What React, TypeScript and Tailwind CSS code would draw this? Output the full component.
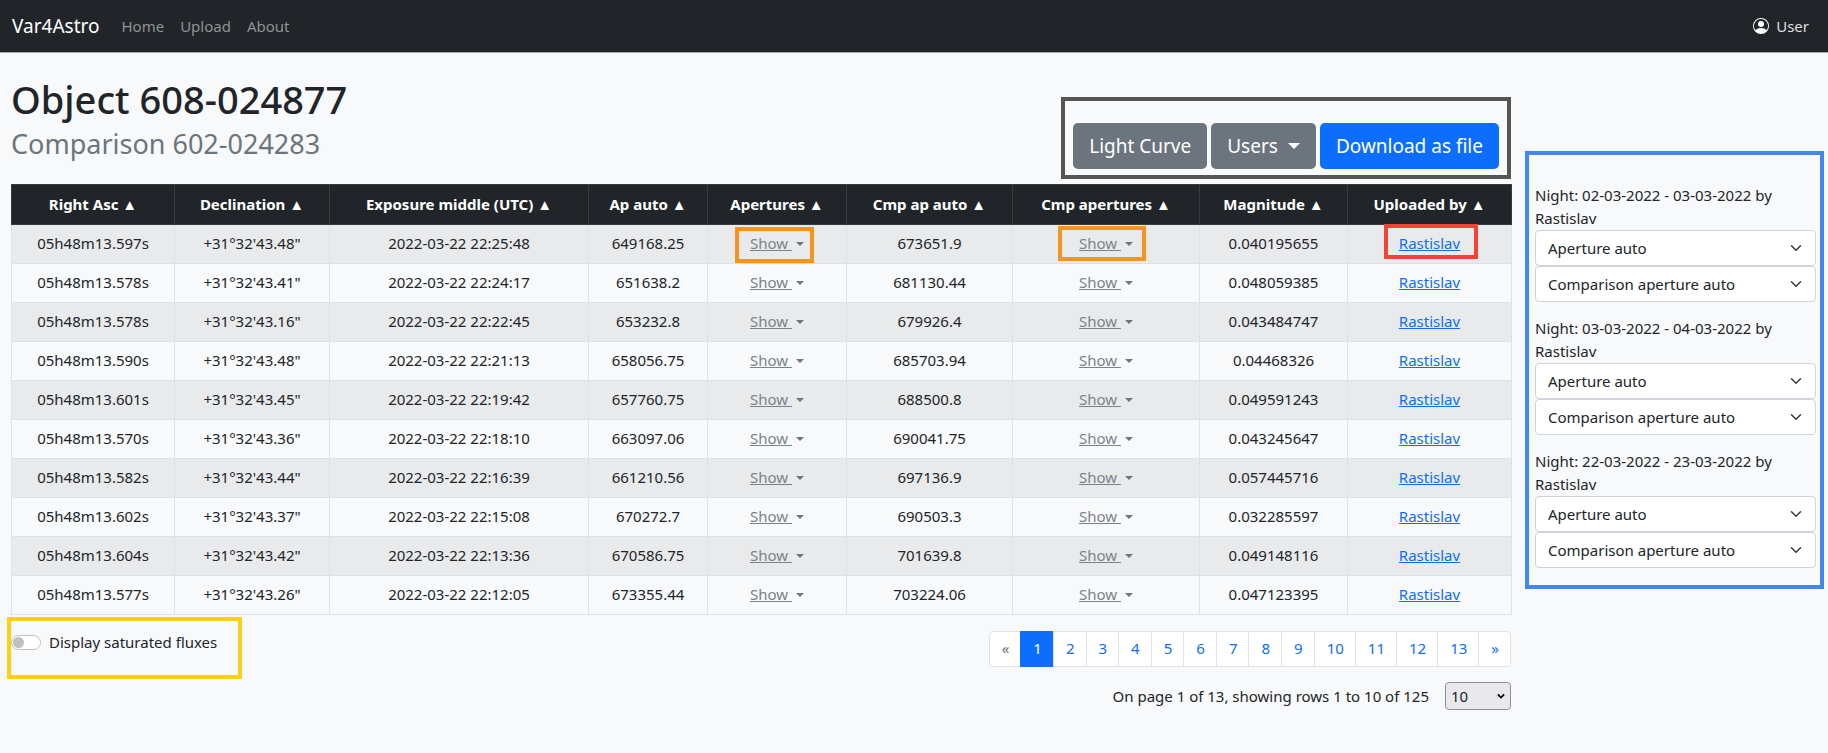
import React from 'react';
import { BsPersonCircle } from 'react-icons/bs';

const columns = [
  { title: 'Right Asc', width: 'w-[163px]' },
  { title: 'Declination', width: 'w-[155px]' },
  { title: 'Exposure middle (UTC)', width: 'w-[259px]' },
  { title: 'Ap auto', width: 'w-[119px]' },
  { title: 'Apertures', width: 'w-[139px]' },
  { title: 'Cmp ap auto', width: 'w-[166px]' },
  { title: 'Cmp apertures', width: 'w-[187px]' },
  { title: 'Magnitude', width: 'w-[148px]' },
  { title: 'Uploaded by', width: 'w-[164px]' },
];

const rows = [
  ['05h48m13.597s', '+31°32\'43.48"', '2022-03-22 22:25:48', '649168.25', '673651.9', '0.040195655'],
  ['05h48m13.578s', '+31°32\'43.41"', '2022-03-22 22:24:17', '651638.2', '681130.44', '0.048059385'],
  ['05h48m13.578s', '+31°32\'43.16"', '2022-03-22 22:22:45', '653232.8', '679926.4', '0.043484747'],
  ['05h48m13.590s', '+31°32\'43.48"', '2022-03-22 22:21:13', '658056.75', '685703.94', '0.04468326'],
  ['05h48m13.601s', '+31°32\'43.45"', '2022-03-22 22:19:42', '657760.75', '688500.8', '0.049591243'],
  ['05h48m13.570s', '+31°32\'43.36"', '2022-03-22 22:18:10', '663097.06', '690041.75', '0.043245647'],
  ['05h48m13.582s', '+31°32\'43.44"', '2022-03-22 22:16:39', '661210.56', '697136.9', '0.057445716'],
  ['05h48m13.602s', '+31°32\'43.37"', '2022-03-22 22:15:08', '670272.7', '690503.3', '0.032285597'],
  ['05h48m13.604s', '+31°32\'43.42"', '2022-03-22 22:13:36', '670586.75', '701639.8', '0.049148116'],
  ['05h48m13.577s', '+31°32\'43.26"', '2022-03-22 22:12:05', '673355.44', '703224.06', '0.047123395'],
];

const nights = ['02-03-2022 - 03-03-2022', '03-03-2022 - 04-03-2022', '22-03-2022 - 23-03-2022'];

const pages = ['«', '1', '2', '3', '4', '5', '6', '7', '8', '9', '10', '11', '12', '13', '»'];

function Marker({ className }: { className: string }) {
  return <span aria-hidden="true" className={`pointer-events-none absolute border-4 ${className}`} />;
}

function ShowButton({ marker }: { marker?: string }) {
  return (
    <button type="button" className="relative inline-flex items-center gap-1 text-[#7b838a]">
      <span className="whitespace-pre underline">Show </span>
      <span className="border-x-4 border-t-4 border-x-transparent border-t-[#6c757d]" />
      {marker && <Marker className={marker} />}
    </button>
  );
}

function NightSelect({ label, night }: { label: string; night: string }) {
  return (
    <div className="relative">
      <select
        aria-label={`${label}, night ${night}`}
        className="block h-9 w-full appearance-none rounded-[4px] border border-[#ced4da] bg-white pr-9 pl-3 text-[15px] text-[#212529]"
      >
        <option>{label}</option>
      </select>
      <svg
        viewBox="0 0 16 16"
        className="pointer-events-none absolute top-3 right-[14px] size-3"
        fill="none"
        stroke="#343a40"
        strokeWidth="2"
        strokeLinecap="round"
        strokeLinejoin="round"
      >
        <path d="m2 5 6 6 6-6" />
      </svg>
    </div>
  );
}

function pageClass(page: string) {
  if (page === '1') return 'border-[#0d6efd] bg-[#0d6efd] text-white';
  if (page === '«') return 'rounded-l-[4px] border-[#dee2e6] bg-white text-[#6c757d]';
  if (page === '»') return 'rounded-r-[4px] border-[#dee2e6] bg-white text-[#0d6efd]';
  return 'border-[#dee2e6] bg-white text-[#0d6efd]';
}

export default function App() {
  return (
    <div className="min-h-screen bg-[#f8f9fa] font-['Noto_Sans',sans-serif] text-[15px] leading-[23px] text-[#212529]">
      <nav className="flex h-[53px] items-center border-b border-[#a5a7a9] bg-[#212529] px-3">
        <a href="#" className="mr-[22px] text-[19px] text-white">Var4Astro</a>
        <div className="flex gap-4 text-[#909294]">
          <a href="#home">Home</a>
          <a href="#upload">Upload</a>
          <a href="#about">About</a>
        </div>
        <a href="#user" className="mr-[7px] ml-auto flex items-center gap-[7px] text-[#dedfdf]">
          <BsPersonCircle className="size-4 text-white" />
          User
        </a>
      </nav>

      <main className="flex items-start pl-[11px]">
        <section className="min-w-0 flex-1">
          <header className="flex items-start justify-between">
            <div className="pt-[23px]">
              <h1 className="text-[38px] leading-[46px] font-medium">Object 608-024877</h1>
              <h2 className="text-[27px] leading-[43px] text-[#6c757d]">Comparison 602-024283</h2>
            </div>
            <div className="mt-11 mb-[5px] flex gap-1 border-4 border-[#555555] px-2 pt-[22px] pb-[6px] text-[19px]">
              <button type="button" className="h-[46px] rounded-[5px] bg-[#6c757d] px-4 text-white">Light Curve</button>
              <button type="button" className="flex h-[46px] items-center gap-[10px] rounded-[5px] bg-[#6c757d] px-4 text-white">
                Users
                <span className="border-x-[6px] border-t-[6px] border-x-transparent border-t-white" />
              </button>
              <button type="button" className="h-[46px] rounded-[5px] bg-[#0d6efd] px-4 text-white">Download as file</button>
            </div>
          </header>

          <table className="w-full table-fixed border-collapse text-center">
            <thead>
              <tr className="h-10 bg-[#212529] text-white">
                {columns.map((c) => (
                  <th key={c.title} className={`border border-[#373b3e] pb-px font-bold ${c.width}`}>
                    {`${c.title} ▲`}
                  </th>
                ))}
              </tr>
            </thead>
            <tbody>
              {rows.map((r, i) => (
                <tr key={r[2]} className="h-[39px] odd:bg-[#e9eaeb] *:border *:border-[#dee2e6] *:pb-px">
                  <td>{r[0]}</td>
                  <td>{r[1]}</td>
                  <td>{r[2]}</td>
                  <td>{r[3]}</td>
                  <td><ShowButton marker={i === 0 ? '-left-[15px] -right-[10px] -top-[5px] -bottom-2 border-[#f7941d]' : undefined} /></td>
                  <td>{r[4]}</td>
                  <td><ShowButton marker={i === 0 ? '-left-[21px] -right-[13px] -inset-y-[6px] border-[#f7941d]' : undefined} /></td>
                  <td>{r[5]}</td>
                  <td>
                    <a href="#rastislav" className="relative inline-block text-[#0d6efd] underline">
                      Rastislav
                      {i === 0 && <Marker className="-left-[15px] -right-[18px] -top-2 -bottom-1 border-[#f44336]" />}
                    </a>
                  </td>
                </tr>
              ))}
            </tbody>
          </table>

          <footer className="flex items-start justify-between pt-4">
            <div className="relative flex items-center gap-2">
              <input
                id="saturated"
                type="checkbox"
                role="switch"
                className="h-[15px] w-[30px] appearance-none rounded-full border border-[#bfbfbf] bg-white before:m-px before:block before:size-[11px] before:rounded-full before:bg-[#bfbfbf] checked:before:ml-4"
              />
              <label htmlFor="saturated">Display saturated fluxes</label>
              <Marker className="-top-[14px] -right-[25px] -bottom-[25px] -left-1 border-[#ffd012]" />
            </div>
            <div className="flex flex-col items-end gap-[15px]">
              <nav aria-label="Pages" className="flex">
                {pages.map((p) => (
                  <a key={p} href="#page" className={`-ml-px border pt-[5px] pr-[11px] pb-[6px] pl-3 ${pageClass(p)}`}>{p}</a>
                ))}
              </nav>
              <div className="flex items-center gap-4">
                <span>On page 1 of 13, showing rows 1 to 10 of 125</span>
                <div className="relative">
                  <select aria-label="Rows per page" className="block h-7 w-[66px] appearance-none rounded-[4px] border border-[#8f8f9d] bg-[#e9e9ed] pl-[5px] text-[15px]">
                    <option>10</option>
                  </select>
                  <svg viewBox="0 0 10 10" className="pointer-events-none absolute top-[10px] right-[6px] size-2" fill="none" stroke="#000" strokeWidth="2">
                    <path d="m1 3 4 4 4-4" />
                  </svg>
                </div>
              </div>
            </div>
          </footer>
        </section>

        <aside className="mt-[98px] mr-1 ml-[14px] flex w-[299px] shrink-0 flex-col gap-[15px] border-4 border-[#4285f4] pt-[29px] pr-1 pb-[17px] pl-[6px]">
          {nights.map((n) => (
            <div key={n}>
              <p>{`Night: ${n} by Rastislav`}</p>
              <NightSelect label="Aperture auto" night={n} />
              <NightSelect label="Comparison aperture auto" night={n} />
            </div>
          ))}
        </aside>
      </main>
    </div>
  );
}
